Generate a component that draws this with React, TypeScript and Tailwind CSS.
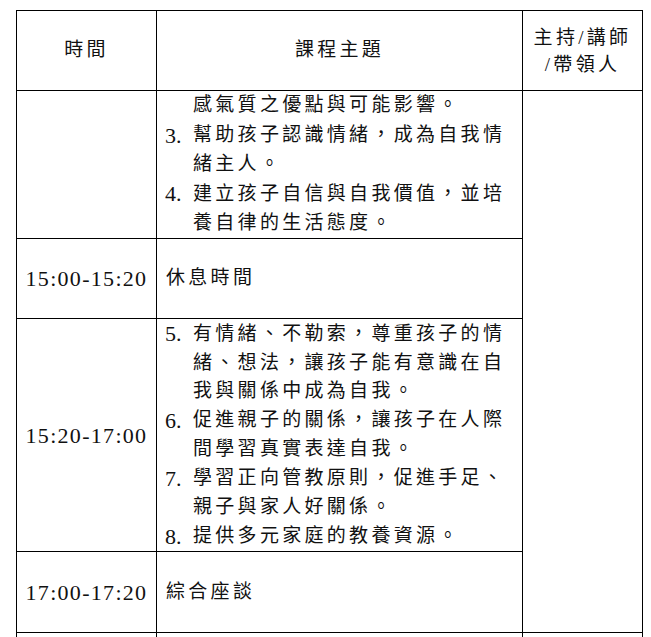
import React from 'react';

const font = { fontFamily: '"Liberation Serif", "Noto Sans CJK TC", serif' };

interface Line {
  mark?: string;
  text: string;
  indent?: boolean;
}

const partOne: Line[] = [
  { text: '感氣質之優點與可能影響。', indent: true },
  { mark: '3.', text: '幫助孩子認識情緒，成為自我情' },
  { text: '緒主人。', indent: true },
  { mark: '4.', text: '建立孩子自信與自我價值，並培' },
  { text: '養自律的生活態度。', indent: true },
];

const partTwo: Line[] = [
  { mark: '5.', text: '有情緒、不勒索，尊重孩子的情' },
  { text: '緒、想法，讓孩子能有意識在自', indent: true },
  { text: '我與關係中成為自我。', indent: true },
  { mark: '6.', text: '促進親子的關係，讓孩子在人際' },
  { text: '間學習真實表達自我。', indent: true },
  { mark: '7.', text: '學習正向管教原則，促進手足、' },
  { text: '親子與家人好關係。', indent: true },
  { mark: '8.', text: '提供多元家庭的教養資源。' },
];

const Lines = ({ lines, lh }: { lines: Line[]; lh: string }) => (
  <div className="flex flex-col">
    {lines.map((l, i) => (
      <div key={i} className={`flex items-center whitespace-nowrap ${lh}`}>
        <span className="w-[28px] shrink-0 text-[22px] tracking-normal">{l.mark || ''}</span>
        <span>{l.text}</span>
      </div>
    ))}
  </div>
);

const App = () => {
  const cell = 'border border-black align-middle p-0';
  const time = `${cell} text-center text-[22px] tracking-[1.3px]`;
  return (
    <div className="w-[651px] h-[637px] overflow-hidden bg-white text-[#111]" style={font}>
      <table className="ml-[16px] mt-[10px] table-fixed border-collapse w-[626px] text-[19px] tracking-[3.3px]">
        <colgroup>
          <col className="w-[140px]" />
          <col className="w-[366px]" />
          <col className="w-[120px]" />
        </colgroup>
        <tbody>
          <tr className="h-[80px]">
            <td className={`${cell} text-center`}>時間</td>
            <td className={`${cell} text-center`}>課程主題</td>
            <td className={`${cell} text-center leading-[27px]`}>
              <div>主持/講師</div>
              <div>/帶領人</div>
            </td>
          </tr>
          <tr className="h-[148px]">
            <td className={cell}></td>
            <td className={`${cell} pl-[8px]`}>
              <Lines lines={partOne} lh="h-[29.4px]" />
            </td>
            <td className={cell} rowSpan={4}></td>
          </tr>
          <tr className="h-[80px]">
            <td className={time}>15:00-15:20</td>
            <td className={`${cell} pl-[9px]`}>休息時間</td>
          </tr>
          <tr className="h-[233px]">
            <td className={time}>15:20-17:00</td>
            <td className={`${cell} pl-[8px]`}>
              <Lines lines={partTwo} lh="h-[28.9px]" />
            </td>
          </tr>
          <tr className="h-[81px]">
            <td className={time}>17:00-17:20</td>
            <td className={`${cell} pl-[9px]`}>綜合座談</td>
          </tr>
          <tr className="h-[40px]">
            <td className={cell}></td>
            <td className={cell}></td>
            <td className={cell}></td>
          </tr>
        </tbody>
      </table>
    </div>
  );
};

export default App;
